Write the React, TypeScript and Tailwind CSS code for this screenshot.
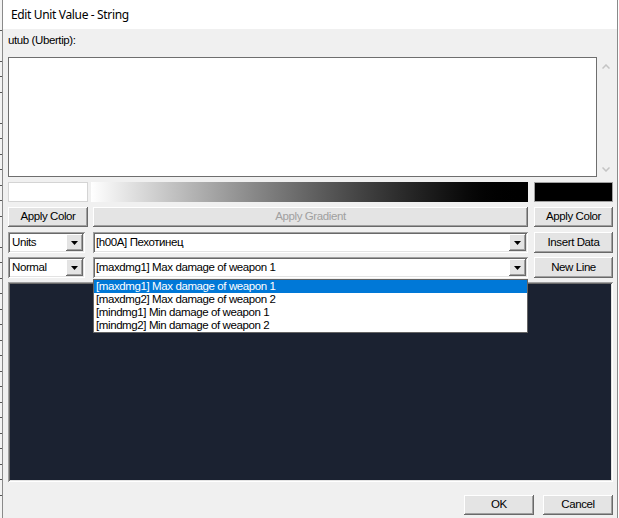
import type { ReactNode } from 'react';

const raised =
  'shadow-[inset_-1px_-1px_#696969,inset_1px_1px_#ffffff,inset_-2px_-2px_#a0a0a0,inset_2px_2px_#e3e3e3]';
const sunken =
  'shadow-[inset_1px_1px_#a0a0a0,inset_-1px_-1px_#ffffff,inset_2px_2px_#696969,inset_-2px_-2px_#e3e3e3]';

const Btn = ({ children, disabled, className = '' }: { children: ReactNode; disabled?: boolean; className?: string }) => (
  <button
    className={`flex h-[20px] items-center justify-center bg-[#e4e4e4] text-[11.5px] leading-none ${raised} ${
      disabled ? 'text-[#a0a0a0]' : 'text-black'
    } ${className}`}
  >
    {children}
  </button>
);

const DropArrow = () => (
  <div className={`mr-[2px] flex h-[17px] w-[17px] shrink-0 items-center justify-center bg-[#e4e4e4] ${raised}`}>
    <svg width="7" height="4" viewBox="0 0 7 4">
      <polygon points="0,0 7,0 3.5,4" fill="#000" />
    </svg>
  </div>
);

const Combo = ({ value, className = '', pad = 'pl-[3px]' }: { value: string; className?: string; pad?: string }) => (
  <div className={`flex h-[21px] items-center bg-white ${sunken} ${className}`}>
    <span className={`flex-1 truncate text-[11.5px] leading-none ${pad}`}>{value}</span>
    <DropArrow />
  </div>
);

const options = [
  '[maxdmg1] Max damage of weapon 1',
  '[maxdmg2] Max damage of weapon 2',
  '[mindmg1] Min damage of weapon 1',
  '[mindmg2] Min damage of weapon 2',
];

export default function App() {
  return (
    <div className="flex h-[518px] w-[619px] overflow-hidden bg-white font-['Liberation_Sans',Arial,sans-serif] tracking-[-0.4px] text-black">
      {/* desktop behind the dialog */}
      <div className="w-[2px] shrink-0 bg-[#f3f3f3] bg-[repeating-linear-gradient(to_bottom,transparent_0,transparent_14.5px,#555555_14.5px,#555555_15.5px)]" />

      {/* dialog window */}
      <div className="flex w-[616px] shrink-0 flex-col border-x border-[#8a8a8a]">
        {/* Title bar */}
        <div className="flex h-[29px] shrink-0 items-center bg-white pl-[8px] font-['Noto_Sans',sans-serif] text-[12px] tracking-[-0.35px]">
          Edit Unit Value - String
        </div>

        {/* Client area */}
        <div className="flex flex-1 flex-col bg-[#f0f0f0] pl-[5px] pr-[4px]">
          <div className="mt-[4px] h-[14px] text-[11.5px] leading-[14px]">utub (Ubertip):</div>

          {/* text box */}
          <div className="mt-[10px] flex h-[120px]">
            <div className="w-[589px] border border-[#6e6e6e] bg-white" />
            <div className="flex w-[16px] flex-col items-center justify-between pb-[5px] pl-[1px] pt-[7px]">
              <svg width="8" height="5" viewBox="0 0 8 5">
                <polyline points="0.5,4.5 4,1 7.5,4.5" fill="none" stroke="#c4c4c4" strokeWidth="1.5" />
              </svg>
              <svg width="8" height="5" viewBox="0 0 8 5">
                <polyline points="0.5,0.5 4,4 7.5,0.5" fill="none" stroke="#c4c4c4" strokeWidth="1.5" />
              </svg>
            </div>
          </div>

          {/* colour swatches */}
          <div className="mt-[5px] flex h-[20px] gap-[5px]">
            <div className="w-[80px] border border-[#d4d4d4] bg-white" />
            <div className="ml-[-2px] w-[437px] bg-gradient-to-r from-white to-black" />
            <div className="ml-[1px] w-[79px] border border-[#a0a0a0] bg-black" />
          </div>

          {/* apply buttons */}
          <div className="mt-[5px] flex gap-[5px]">
            <Btn className="w-[80px]">Apply Color</Btn>
            <Btn disabled className="w-[435px]">
              Apply Gradient
            </Btn>
            <Btn className="ml-[1px] w-[79px]">Apply Color</Btn>
          </div>

          {/* data row */}
          <div className="mt-[5px] flex gap-[5px]">
            <div className="w-[80px]">
              <Combo value="Units" pad="pl-[4px]" className="w-[77px]" />
            </div>
            <Combo value="[h00A] Пехотинец" className="w-[435px]" />
            <Btn className="ml-[1px] h-[21px] w-[79px]">Insert Data</Btn>
          </div>

          {/* field row */}
          <div className="mt-[4px] flex gap-[5px]">
            <div className="w-[80px]">
              <Combo value="Normal" pad="pl-[4px]" className="w-[77px]" />
            </div>
            <div className="relative z-10 w-[435px]">
              <Combo value="[maxdmg1] Max damage of weapon 1" />
              <div className="absolute left-0 top-[22px] w-[435px] border border-[#646464] bg-white">
                {options.map((o, i) => (
                  <div
                    key={o}
                    className={`h-[13px] pl-[2px] text-[11.5px] leading-[13px] ${
                      i === 0 ? 'bg-[#0078d7] text-white' : 'text-black'
                    }`}
                  >
                    {o}
                  </div>
                ))}
              </div>
            </div>
            <Btn className="ml-[1px] h-[21px] w-[79px]">New Line</Btn>
          </div>

          {/* preview */}
          <div className={`mt-[4px] h-[200px] w-[605px] bg-[#1b2231] ${sunken}`} />

          {/* OK / Cancel */}
          <div className="mt-[13px] flex justify-end gap-[9px]">
            <Btn className="w-[70px]">OK</Btn>
            <Btn className="w-[70px]">Cancel</Btn>
          </div>
        </div>
      </div>
      <div className="flex-1 bg-white" />
    </div>
  );
}
